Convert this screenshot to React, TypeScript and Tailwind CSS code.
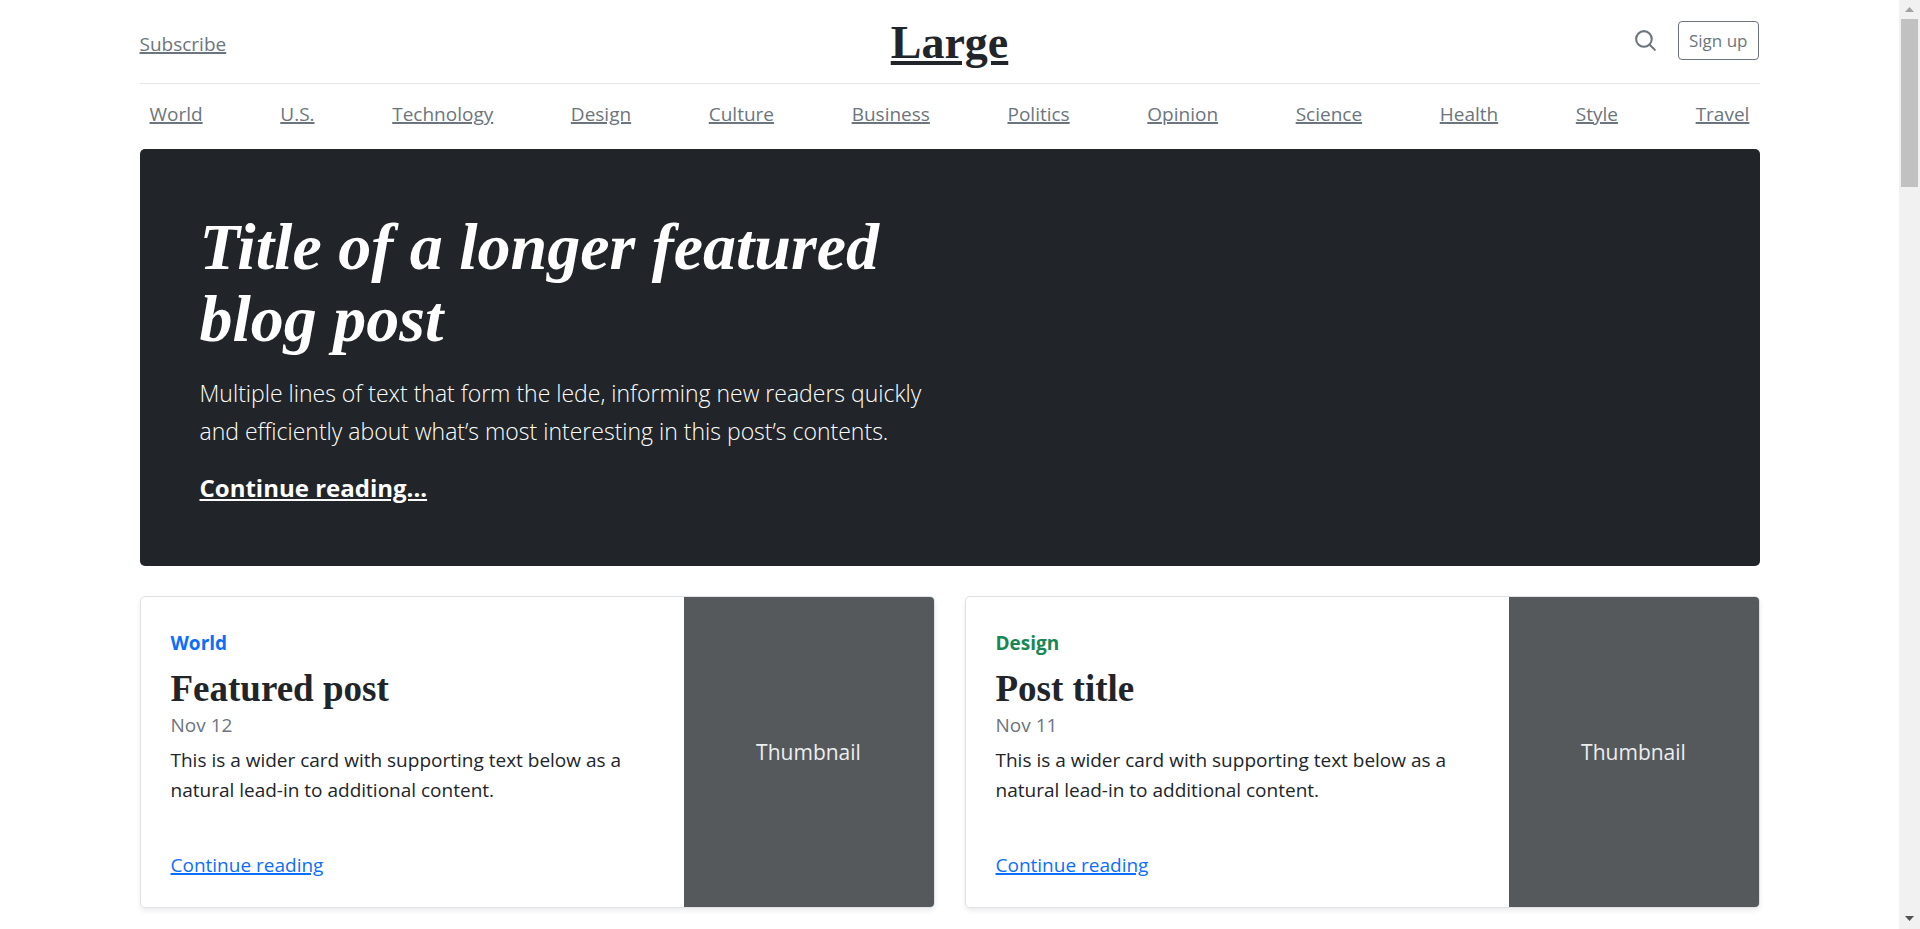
const sections = [
  'World',
  'U.S.',
  'Technology',
  'Design',
  'Culture',
  'Business',
  'Politics',
  'Opinion',
  'Science',
  'Health',
  'Style',
  'Travel',
];

type Post = {
  category: string;
  categoryClass: string;
  title: string;
  date: string;
};

const posts: Post[] = [
  { category: 'World', categoryClass: 'text-[#0d6efd]', title: 'Featured post', date: 'Nov 12' },
  { category: 'Design', categoryClass: 'text-[#198754]', title: 'Post title', date: 'Nov 11' },
];

function SearchIcon() {
  return (
    <svg
      width="25"
      height="25"
      viewBox="0 0 24 24"
      fill="none"
      stroke="currentColor"
      strokeWidth="2"
      strokeLinecap="round"
      strokeLinejoin="round"
      aria-hidden="true"
    >
      <circle cx="10.5" cy="10.5" r="7.5" />
      <path d="M21 21l-5.2-5.2" />
    </svg>
  );
}

function Header() {
  return (
    <header className="grid h-[84px] grid-cols-3 items-center border-b border-[#e5e5e5]">
      <div className="pt-1">
        <a href="#subscribe" className="text-[#6c757d] underline decoration-2 underline-offset-1">
          Subscribe
        </a>
      </div>
      <div className="pt-0.5 text-center">
        <a
          href="#home"
          className="font-['Liberation_Serif',serif] text-[46px] leading-[54px] font-bold underline decoration-4 underline-offset-3"
        >
          Large
        </a>
      </div>
      <div className="flex items-center justify-end gap-5 pr-px pb-0.5 text-[#6c757d]">
        <a href="#search" aria-label="Search">
          <SearchIcon />
        </a>
        <button
          type="button"
          className="h-[39px] rounded border border-[#6c757d] px-2.5 text-[17px] leading-6"
        >
          Sign up
        </button>
      </div>
    </header>
  );
}

function SectionNav() {
  return (
    <nav className="flex h-[65px] justify-between px-2.5 pt-[15px]">
      {sections.map((name) => (
        <a
          key={name}
          href={`#${name}`}
          className="text-[#6c757d] underline decoration-2 underline-offset-1"
        >
          {name}
        </a>
      ))}
    </nav>
  );
}

function Hero() {
  return (
    <section className="rounded-[5px] bg-[#212529] p-[60px] text-white">
      <div className="w-1/2 text-[23px] leading-[38px]">
        <h1 className="pt-0.5 font-['Liberation_Serif',serif] text-[66px] leading-[72px] font-bold italic">
          Title of a longer featured blog post
        </h1>
        <p className="my-[19px] font-light">
          Multiple lines of text that form the lede, informing new readers quickly and efficiently
          about what’s most interesting in this post’s contents.
        </p>
        <p className="text-2xl leading-[37px]">
          <a href="#featured" className="font-bold underline decoration-2 underline-offset-2">
            Continue reading...
          </a>
        </p>
      </div>
    </section>
  );
}

function PostCard({ post }: { post: Post }) {
  return (
    <article className="flex h-[312px] overflow-hidden rounded-[5px] border border-[#dee2e6] shadow-[0_3px_5px_rgba(0,0,0,0.075)]">
      <div className="flex flex-1 flex-col px-[30px] pt-[31px] pb-[27px]">
        <strong className={`mb-2.5 font-bold ${post.categoryClass}`}>{post.category}</strong>
        <h3 className="font-['Liberation_Serif',serif] text-[37px] leading-[42px] font-bold">
          {post.title}
        </h3>
        <div className="mb-[5px] text-[#6c757d]">{post.date}</div>
        <p className="mb-auto">
          This is a wider card with supporting text below as a natural lead-in to additional
          content.
        </p>
        <a
          href="#post"
          className="self-start text-[#0d6efd] underline decoration-2 underline-offset-1"
        >
          Continue reading
        </a>
      </div>
      <div className="flex w-[250px] shrink-0 items-center justify-center bg-[#55595c] text-[21px] text-[#eceeef]">
        Thumbnail
      </div>
    </article>
  );
}

function ScrollTrack() {
  return (
    <aside
      aria-hidden="true"
      className="sticky top-0 flex h-screen w-[21px] shrink-0 flex-col items-center bg-[#f1f1f1]"
    >
      <svg width="21" height="19" viewBox="0 0 21 19" fill="#a3a3a3">
        <path d="M6 12L10.5 7L15 12Z" />
      </svg>
      <div className="h-[168px] w-[17px] bg-[#c1c1c1]" />
      <svg className="mt-auto" width="21" height="19" viewBox="0 0 21 19" fill="#505050">
        <path d="M6 6L10.5 11L15 6Z" />
      </svg>
    </aside>
  );
}

export default function App() {
  return (
    <div className="flex min-h-screen bg-white font-['Open_Sans',sans-serif] text-[19px] leading-[30px] text-[#212529]">
      <div className="min-w-0 flex-1">
        <div className="mx-auto max-w-[1620px]">
          <Header />
          <SectionNav />
          <main>
            <Hero />
            <div className="mt-[30px] grid grid-cols-2 gap-[30px]">
              {posts.map((post) => (
                <PostCard key={post.title} post={post} />
              ))}
            </div>
          </main>
        </div>
      </div>
      <ScrollTrack />
    </div>
  );
}
